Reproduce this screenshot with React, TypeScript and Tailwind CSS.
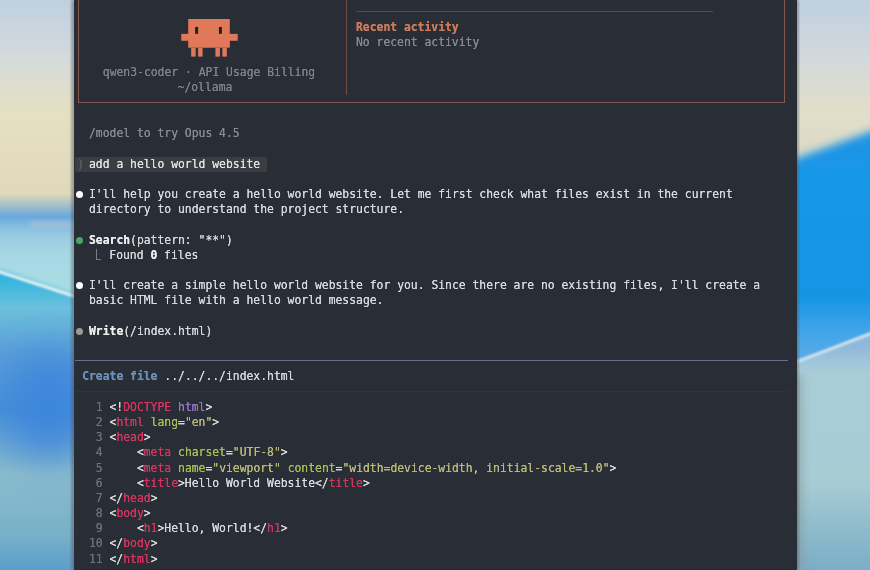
import React from "react";

const T = ({ c, children }: { c: string; children: React.ReactNode }) => <span className={c}>{children}</span>;
const P = "text-[#d8dadd]";
const TAG = "text-[#d6355f]";
const ATTR = "text-[#a8bf4e]";
const STR = "text-[#bcbc78]";

function Row({ children, className = "" }: { children?: React.ReactNode; className?: string }) {
  return <div className={`h-[15.2px] leading-[15.2px] whitespace-pre flex items-center ${className}`}>{children}</div>;
}

function Dot({ color }: { color: string }) {
  return (
    <span className="w-[13.7px] h-full shrink-0 flex items-center">
      <span className={`w-[7px] h-[7px] rounded-full ml-[1px] ${color}`} />
    </span>
  );
}

function CodeLine({ n, children }: { n: number; children?: React.ReactNode }) {
  return (
    <Row>
      <span className="w-[13.7px] shrink-0" />
      <span className="w-[13.7px] shrink-0 text-right text-[#6c7079]">{n}</span>
      <span className="w-[6.85px] shrink-0" />
      <span className={P}>{children}</span>
    </Row>
  );
}

function Mascot() {
  return (
    <svg width="57" height="40" viewBox="0 0 57 40" fill="#e0795a" className="block ml-[2px]">
      <rect x="7" y="1" width="42" height="29" />
      <rect x="0" y="16" width="57" height="7" />
      <rect x="10" y="30" width="4.5" height="9" />
      <rect x="17" y="30" width="4.5" height="9" />
      <rect x="34.5" y="30" width="4.5" height="9" />
      <rect x="41.5" y="30" width="4.5" height="9" />
      <rect x="14" y="9" width="3" height="7" fill="#241f22" />
      <rect x="38" y="9" width="3" height="7" fill="#241f22" />
    </svg>
  );
}

function LeftWall() {
  return (
    <svg width="74" height="570" viewBox="0 0 74 570" className="block">
      <defs>
        <linearGradient id="lg" gradientUnits="userSpaceOnUse" x1="0" y1="0" x2="0" y2="570">
          <stop offset="0" stopColor="#bfd0e0" />
          <stop offset="0.1" stopColor="#d4dadc" />
          <stop offset="0.2" stopColor="#e6e0c2" />
          <stop offset="0.34" stopColor="#e0d8ba" />
          <stop offset="0.38" stopColor="#6aa8dc" />
          <stop offset="0.48" stopColor="#28b4de" />
          <stop offset="0.54" stopColor="#6cc0dc" />
          <stop offset="0.62" stopColor="#5c9ed8" />
          <stop offset="0.72" stopColor="#4a90d8" />
          <stop offset="0.83" stopColor="#8cbccc" />
          <stop offset="0.94" stopColor="#78b0c8" />
          <stop offset="1" stopColor="#5b9ecb" />
        </linearGradient>
        <linearGradient id="la" gradientUnits="userSpaceOnUse" x1="0" y1="222" x2="0" y2="290">
          <stop offset="0" stopColor="#7cb4e0" />
          <stop offset="0.2" stopColor="#98cce2" />
          <stop offset="0.5" stopColor="#a8d8e4" />
          <stop offset="1" stopColor="#a8dce4" />
        </linearGradient>
        <filter id="lb" x="-20%" y="-20%" width="140%" height="140%"><feGaussianBlur stdDeviation="0.8" /></filter>
        <filter id="lb2" x="-50%" y="-500%" width="200%" height="1100%"><feGaussianBlur stdDeviation="2.5" /></filter>
        <filter id="lb3" x="-100%" y="-100%" width="300%" height="300%"><feGaussianBlur stdDeviation="20" /></filter>
      </defs>
      <rect width="74" height="570" fill="url(#lg)" />
      <ellipse cx="48" cy="405" rx="40" ry="55" fill="#3a84dc" opacity="0.85" filter="url(#lb3)" />
      <path d="M-20 220 L100 220 L100 303 L-20 264 Z" fill="url(#la)" filter="url(#lb2)" />
      <path d="M30 222 L100 222 L100 226 L30 226 Z" fill="#d8c8c8" opacity="0.5" filter="url(#lb2)" />
      <path d="M-20 264 L100 303 L100 306 L-20 267 Z" fill="#eef4f6" filter="url(#lb)" />
      <rect x="71" y="0" width="6" height="570" fill="#4a4f58" opacity="0.4" filter="url(#lb)" />
    </svg>
  );
}

function RightWall() {
  return (
    <svg width="73" height="570" viewBox="0 0 73 570" className="block">
      <defs>
        <linearGradient id="rg" gradientUnits="userSpaceOnUse" x1="0" y1="0" x2="0" y2="570">
          <stop offset="0" stopColor="#bfd0e0" />
          <stop offset="0.1" stopColor="#d2d8dc" />
          <stop offset="0.2" stopColor="#e2dec8" />
          <stop offset="0.3" stopColor="#d8d8c8" />
          <stop offset="1" stopColor="#d8d8c8" />
        </linearGradient>
        <linearGradient id="rb1" gradientUnits="userSpaceOnUse" x1="0" y1="150" x2="0" y2="360">
          <stop offset="0" stopColor="#1f94e4" />
          <stop offset="0.12" stopColor="#1898e8" />
          <stop offset="0.7" stopColor="#1694e4" />
          <stop offset="0.85" stopColor="#3ea4ea" />
          <stop offset="1" stopColor="#5cabe4" />
        </linearGradient>
        <linearGradient id="rc" gradientUnits="userSpaceOnUse" x1="0" y1="345" x2="0" y2="570">
          <stop offset="0" stopColor="#8eb8dc" />
          <stop offset="0.12" stopColor="#a8cdd8" />
          <stop offset="0.6" stopColor="#a8ccd4" />
          <stop offset="1" stopColor="#7aaec6" />
        </linearGradient>
        <filter id="rf" x="-20%" y="-20%" width="140%" height="140%"><feGaussianBlur stdDeviation="0.8" /></filter>
        <filter id="rf2" x="-100%" y="-20%" width="300%" height="140%"><feGaussianBlur stdDeviation="4" /></filter>
      </defs>
      <rect width="73" height="570" fill="url(#rg)" />
      <path d="M-20 165 L100 122 L100 345 L-20 370 Z" fill="url(#rb1)" filter="url(#rf2)" />
      <path d="M-20 368 L100 322 L100 590 L-20 590 Z" fill="url(#rc)" filter="url(#rf)" />
      <path d="M-20 368 L100 322 L100 325 L-20 371 Z" fill="#cfe4ee" filter="url(#rf)" />
      <rect x="-3" y="375" width="8" height="195" fill="#8a8f94" opacity="0.6" filter="url(#rf2)" />
      <rect x="-2" y="0" width="4" height="570" fill="#4a4f58" opacity="0.4" filter="url(#rf)" />
    </svg>
  );
}

export default function App() {
  return (
    <div className="w-[870px] h-[570px] overflow-hidden flex bg-[#292d36]">
      <aside className="w-[74px] shrink-0"><LeftWall /></aside>
      <main className="w-[723px] shrink-0 h-[570px] overflow-hidden bg-[#292d36] pl-[1.3px] text-[11.38px] text-[#d8dadd] blur-[0.25px] [text-shadow:0_0_0.5px_currentColor] font-['DejaVu_Sans_Mono','Liberation_Mono',monospace]">
        <section className="ml-[2.7px] w-[707px] h-[103px] border-x border-b border-[#86594e] flex">
          <div className="w-[268px] h-[95px] border-r border-[#6f5048] pr-[7px] pt-[18px] flex flex-col items-center text-[#7f8389] shrink-0">
            <Mascot />
            <div className="mt-[7px]">
              <Row className="justify-center">qwen3-coder · API Usage Billing</Row>
              <Row className="justify-center mr-[8px]">~/ollama</Row>
            </div>
          </div>
          <div className="pl-[9px] pt-[11px]">
            <div className="w-[357px] h-px bg-[#5d4a48]" />
            <div className="mt-[8px]">
              <Row className="font-bold text-[#c97b5c]">Recent activity</Row>
              <Row className="text-[#888b91]">No recent activity</Row>
            </div>
          </div>
        </section>

        <div className="mt-[23.4px]">
          <Row className="pl-[13.7px] text-[#888b91]">/model to try Opus 4.5</Row>
          <Row />
          <Row>
            <span className="w-[192px] h-full bg-[#3a3d41] flex text-[#e2e3e4]">
              <span className="w-[13.7px] pl-[2px] text-[#5d6066]">)</span>
              add a hello world website
            </span>
          </Row>
          <Row />
          <Row><Dot color="bg-white" />I'll help you create a hello world website. Let me first check what files exist in the current</Row>
          <Row className="pl-[13.7px]">directory to understand the project structure.</Row>
          <Row />
          <Row><Dot color="bg-[#46a868]" /><b className="text-[#eceded]">Search</b>(pattern: "**")</Row>
          <Row>
            <span className="w-[21px] shrink-0" />
            <span className="w-[5px] h-[11px] mb-[2px] border-l border-b border-[#7a7d83] shrink-0" />
            <span className="w-[8px] shrink-0" />
            Found <b className="text-[#eceded]">0</b> files
          </Row>
          <Row />
          <Row><Dot color="bg-white" />I'll create a simple hello world website for you. Since there are no existing files, I'll create a</Row>
          <Row className="pl-[13.7px]">basic HTML file with a hello world message.</Row>
          <Row />
          <Row><Dot color="bg-[#9b9b9b]" /><b className="text-[#eceded]">Write</b>(/index.html)</Row>
          <Row />
          <Row><div className="w-[713px] h-px mb-[2.6px] bg-[#6a6d8e]" /></Row>
          <Row className="pl-[6.85px]"><b className="text-[#6c8fb8]">Create file</b> ../../../index.html</Row>
          <Row><div className="w-[713px] h-px mb-[1.4px] bg-[#30343e]" /></Row>
          <CodeLine n={1}>&lt;!<T c={TAG}>DOCTYPE</T> <T c="text-[#9477cc]">html</T>&gt;</CodeLine>
          <CodeLine n={2}>&lt;<T c={TAG}>html</T> <T c={ATTR}>lang</T>=<T c={STR}>"en"</T>&gt;</CodeLine>
          <CodeLine n={3}>&lt;<T c={TAG}>head</T>&gt;</CodeLine>
          <CodeLine n={4}>    &lt;<T c={TAG}>meta</T> <T c={ATTR}>charset</T>=<T c={STR}>"UTF-8"</T>&gt;</CodeLine>
          <CodeLine n={5}>    &lt;<T c={TAG}>meta</T> <T c={ATTR}>name</T>=<T c={STR}>"viewport"</T> <T c={ATTR}>content</T>=<T c={STR}>"width=device-width, initial-scale=1.0"</T>&gt;</CodeLine>
          <CodeLine n={6}>    &lt;<T c={TAG}>title</T>&gt;Hello World Website&lt;/<T c={TAG}>title</T>&gt;</CodeLine>
          <CodeLine n={7}>&lt;/<T c={TAG}>head</T>&gt;</CodeLine>
          <CodeLine n={8}>&lt;<T c={TAG}>body</T>&gt;</CodeLine>
          <CodeLine n={9}>    &lt;<T c={TAG}>h1</T>&gt;Hello, World!&lt;/<T c={TAG}>h1</T>&gt;</CodeLine>
          <CodeLine n={10}>&lt;/<T c={TAG}>body</T>&gt;</CodeLine>
          <CodeLine n={11}>&lt;/<T c={TAG}>html</T>&gt;</CodeLine>
        </div>
      </main>
      <aside className="w-[73px] shrink-0"><RightWall /></aside>
    </div>
  );
}
